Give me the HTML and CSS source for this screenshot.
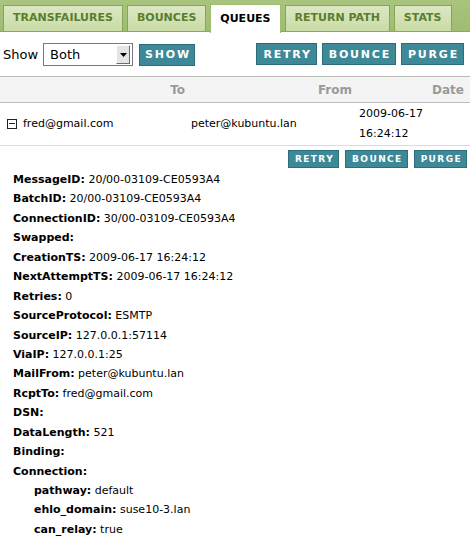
FILE: index.html
```html
<!DOCTYPE html>
<html>
<head>
<meta charset="utf-8">
<link rel="stylesheet" href="styles.css">
</head>
<body>
<div class="tabbar">
  <a class="tab">TRANSFAILURES</a>
  <a class="tab">BOUNCES</a>
  <a class="tab active">QUEUES</a>
  <a class="tab">RETURN PATH</a>
  <a class="tab">STATS</a>
</div>
<div class="toolbar">
  <div class="left">
    <span class="show-label">Show</span>
    <div class="select"><span class="sel-text">Both</span><span class="sel-btn"><svg width="7" height="4" viewBox="0 0 7 4"><path d="M0 0h7L3.5 4z" fill="#000"/></svg></span></div>
    <button class="btn">SHOW</button>
  </div>
  <div class="right">
    <button class="btn">RETRY</button>
    <button class="btn">BOUNCE</button>
    <button class="btn">PURGE</button>
  </div>
</div>
<div class="thead">
  <div class="th">To</div>
  <div class="th">From</div>
  <div class="th">Date</div>
</div>
<div class="trow">
  <div class="td first"><span class="minus"></span>fred@gmail.com</div>
  <div class="td">peter@kubuntu.lan</div>
  <div class="td date">2009-06-17 16:24:12</div>
</div>
<div class="actions">
  <button class="btn small">RETRY</button>
  <button class="btn small">BOUNCE</button>
  <button class="btn small">PURGE</button>
</div>
<div class="details">
  <div class="line"><b>MessageID:</b> 20/00-03109-CE0593A4</div>
  <div class="line"><b>BatchID:</b> 20/00-03109-CE0593A4</div>
  <div class="line"><b>ConnectionID:</b> 30/00-03109-CE0593A4</div>
  <div class="line"><b>Swapped:</b></div>
  <div class="line"><b>CreationTS:</b> 2009-06-17 16:24:12</div>
  <div class="line"><b>NextAttemptTS:</b> 2009-06-17 16:24:12</div>
  <div class="line"><b>Retries:</b> 0</div>
  <div class="line"><b>SourceProtocol:</b> ESMTP</div>
  <div class="line"><b>SourceIP:</b> 127.0.0.1:57114</div>
  <div class="line"><b>ViaIP:</b> 127.0.0.1:25</div>
  <div class="line"><b>MailFrom:</b> peter@kubuntu.lan</div>
  <div class="line"><b>RcptTo:</b> fred@gmail.com</div>
  <div class="line"><b>DSN:</b></div>
  <div class="line"><b>DataLength:</b> 521</div>
  <div class="line"><b>Binding:</b></div>
  <div class="line"><b>Connection:</b></div>
  <div class="nested">
    <div class="line"><b>pathway:</b> default</div>
    <div class="line"><b>ehlo_domain:</b> suse10-3.lan</div>
    <div class="line"><b>can_relay:</b> true</div>
  </div>
</div>
</body>
</html>
```

FILE: styles.css
```css
* { box-sizing: border-box; }
html, body {
  margin: 0;
  padding: 0;
  background: #fff;
  width: 470px;
  overflow: hidden;
  font-family: "DejaVu Sans", Verdana, sans-serif;
  font-size: 11px;
  color: #000;
}
.tabbar {
  display: flex;
  gap: 4px;
  padding: 5px 0 0 3px;
  height: 32px;
  background: linear-gradient(#a9c47e, #9fbd71);
  border-bottom: 1px solid #88a85a;
  align-items: flex-end;
}
.tab {
  display: block;
  height: 26px;
  line-height: 24px;
  padding: 0 9px;
  white-space: nowrap;
  background: linear-gradient(#dbe8c3, #c9dba6);
  border: 1px solid #86a655;
  border-bottom: none;
  color: #5b7d2e;
  font-weight: bold;
  font-size: 11px;
}
.tab.active {
  background: #fff;
  color: #000;
  height: 29px;
  line-height: 28px;
  margin-bottom: -2px;
  border-color: #9fbd71;
}
.toolbar {
  display: flex;
  justify-content: space-between;
  align-items: flex-start;
  padding: 11px 6px 0 3px;
  height: 44px;
}
.left, .right { display: flex; align-items: center; gap: 5px; }
.right { gap: 5px; }
.show-label { font-size: 13px; }
.select {
  width: 90px;
  height: 23px;
  border: 1px solid #7a7a7a;
  display: flex;
  align-items: center;
  justify-content: space-between;
  padding: 0 2px 0 6px;
  font-size: 13px;
  margin-right: 1px;
}
.sel-btn {
  width: 14px;
  height: 19px;
  background: #e4e4e4;
  border: 1px solid;
  border-color: #fff #6c6c6c #6c6c6c #fff;
  display: flex;
  align-items: center;
  justify-content: center;
}
.btn {
  font-family: "DejaVu Sans", Verdana, sans-serif;
  background: #3d8998;
  border: 1px solid #2b6d7b;
  color: #fff;
  font-weight: bold;
  font-size: 11px;
  letter-spacing: 1.8px;
  height: 22px;
  padding: 0 4px 0 6px;
  margin: 0;
  cursor: pointer;
}
.left .btn { padding: 0 3px 0 5px; }
.thead, .trow {
  display: grid;
  grid-template-columns: 188px 167px 115px;
}
.thead {
  height: 27px;
  background: #f4f4f4;
  border-top: 1px solid #bcbcbc;
  border-bottom: 1px solid #bcbcbc;
  align-items: center;
}
.th {
  text-align: right;
  color: #9a9a9a;
  font-weight: bold;
  font-size: 12px;
  padding-right: 3px;
}
.th:last-child { padding-right: 6px; }
.trow {
  height: 43px;
  border-bottom: 1px solid #dddddd;
  line-height: 20px;
  align-items: center;
}
.td { padding-left: 3px; }
.td.first { display: flex; align-items: center; padding-left: 7px; }
.td.date { padding-left: 4px; padding-right: 10px; }
.minus {
  width: 10px;
  height: 10px;
  border: 1px solid #222;
  position: relative;
  margin-right: 6px;
  display: inline-block;
}
.minus::after {
  content: "";
  position: absolute;
  left: 1px; right: 1px; top: 3px;
  height: 1px;
  background: #222;
}
.actions {
  display: flex;
  justify-content: flex-end;
  gap: 6px;
  padding: 4px 3px 0 0;
}
.btn.small {
  font-size: 9px;
  letter-spacing: 1.4px;
  height: 18px;
  padding: 0 4px 0 6px;
}
.details {
  padding: 2px 0 0 13px;
}
.line {
  height: 19.45px;
  line-height: 19.45px;
  white-space: nowrap;
}
.nested { padding-left: 21px; }
```
